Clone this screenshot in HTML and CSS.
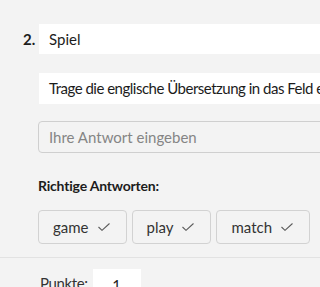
FILE: index.html
```html
<!DOCTYPE html>
<html lang="de">
<head>
    <meta charset="UTF-8">
    <meta name="viewport" content="width=device-width, initial-scale=1.0">
    <title>Vokabel-Quiz</title>
    <link rel="stylesheet" href="styles.css">
</head>
<body>

    <div class="question">
        <!-- Number column -->
        <div class="question-number">2.</div>

        <!-- Question body -->
        <div class="question-body">
            <div class="field title-field">Spiel</div>
            <div class="field hint-field">Trage die englische Übersetzung in das Feld ein.</div>

            <input type="text" class="answer-input" placeholder="Ihre Antwort eingeben" />

            <h3 class="answers-label">Richtige Antworten:</h3>
            <div class="answers">
                <span class="answer-chip">game
                    <svg viewBox="0 0 12 8" width="12" height="8"><polyline points="0.5,4 4,7.3 11.5,0.5" /></svg>
                </span>
                <span class="answer-chip">play
                    <svg viewBox="0 0 12 8" width="12" height="8"><polyline points="0.5,4 4,7.3 11.5,0.5" /></svg>
                </span>
                <span class="answer-chip">match
                    <svg viewBox="0 0 12 8" width="12" height="8"><polyline points="0.5,4 4,7.3 11.5,0.5" /></svg>
                </span>
            </div>
        </div>
    </div>

    <div class="points-row">
        <label for="points">Punkte:</label>
        <input type="text" id="points" class="points-input" value="1" />
    </div>

</body>
</html>
```

FILE: styles.css
```css
/* Basic Reset */
* {
    margin: 0;
    padding: 0;
    box-sizing: border-box;
}

body {
    font-family: Lato, "Open Sans", sans-serif;
    font-size: 15px;
    color: #1c1c1c;
    background-color: #f3f3f3;
    overflow: hidden;
    width: 320px;
    height: 287px;
}

.question {
    display: flex;
    padding: 24px 0 13px 23px;
    border-bottom: 1px solid #e2e2e2;
}

.question-number {
    width: 16px;
    height: 30px;
    line-height: 30px;
    font-weight: 700;
    flex-shrink: 0;
}

.question-body {
    flex: 1;
    min-width: 0;
    margin-right: -40px;
}

.field {
    background-color: #ffffff;
    padding: 0 10px;
    white-space: nowrap;
    overflow: hidden;
}

.title-field {
    height: 30px;
    line-height: 30px;
}

.hint-field {
    height: 31px;
    line-height: 31px;
    margin-top: 19px;
    letter-spacing: -0.5px;
}

.answer-input {
    display: block;
    width: 100%;
    height: 32px;
    margin-top: 17px;
    margin-left: -1px;
    padding: 0 10px;
    font-family: inherit;
    font-size: 15px;
    background-color: #f3f3f3;
    border: 1px solid #cfcfcf;
    border-radius: 4px;
}

.answer-input::placeholder {
    color: #858585;
}

.answers-label {
    font-size: 14px;
    font-weight: 700;
    letter-spacing: -0.2px;
    margin-top: 23px;
    line-height: 20px;
    margin-left: -1px;
}

.answers {
    display: flex;
    gap: 5px;
    margin-top: 14px;
    margin-left: -1px;
}

.answer-chip {
    display: inline-flex;
    align-items: center;
    gap: 9px;
    height: 34px;
    padding: 0 16px 0 14px;
    border: 1px solid #d2d2d2;
    border-radius: 4px;
    color: #333333;
}

.answer-chip svg {
    fill: none;
    stroke: #5a5a5a;
    stroke-width: 1.1;
}

.points-row {
    display: flex;
    align-items: center;
    gap: 5px;
    padding: 11px 0 0 40px;
}

.points-row label {
    color: #333333;
    letter-spacing: -0.4px;
    margin-bottom: 4px;
}

.points-input {
    width: 48px;
    height: 32px;
    border: none;
    background-color: #ffffff;
    text-align: center;
    font-family: inherit;
    font-size: 15px;
    color: #1c1c1c;
}
```
